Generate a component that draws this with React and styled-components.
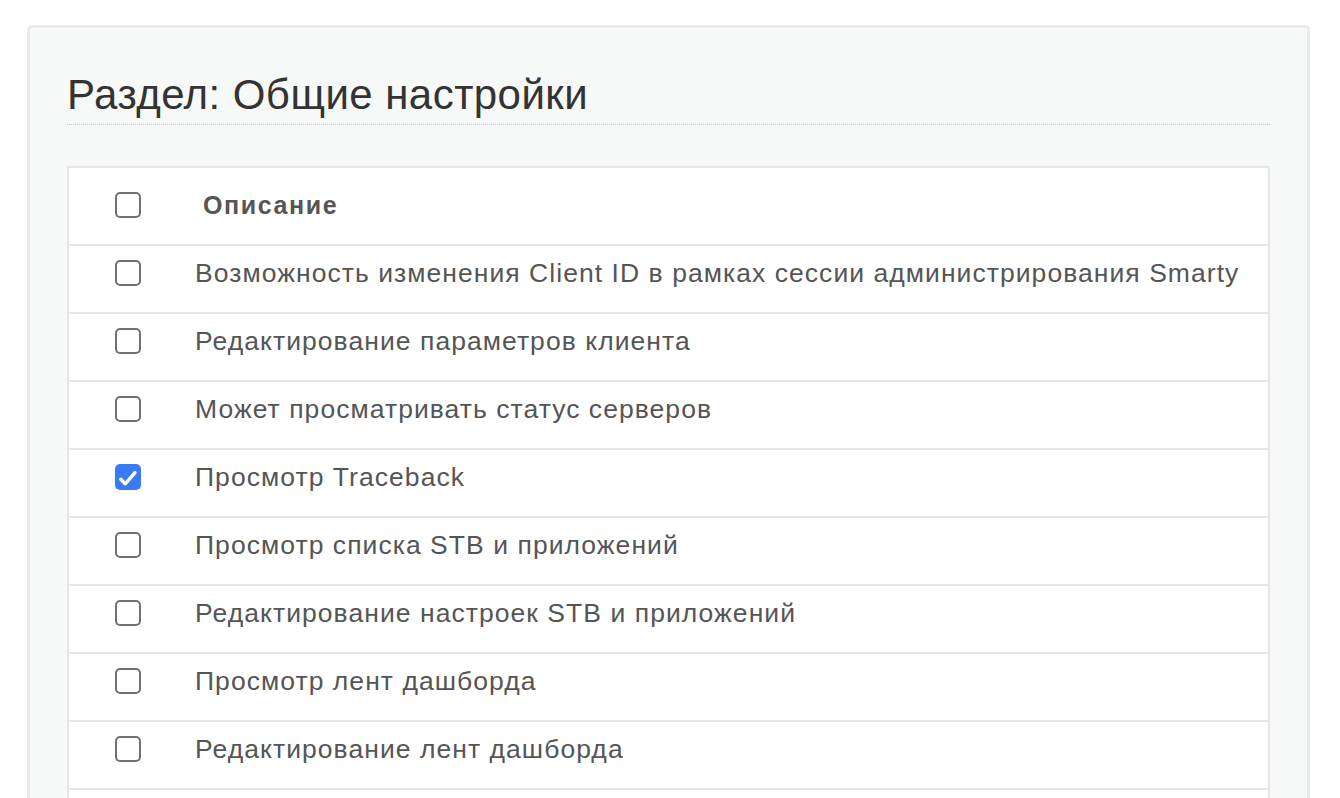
import styled, { createGlobalStyle } from "styled-components";

const GlobalStyle = createGlobalStyle`
    body {
        margin: 0;
        background: #ffffff;
        font-family: "Liberation Sans", Arial, sans-serif;
    }
`;

const Page = styled.div`
    padding: 25px 30px 0 27px;
    height: 798px;
    box-sizing: border-box;
    overflow: hidden;
`;

const Panel = styled.section`
    background: #f7f8f8;
    border: 3px solid #e8eaeb;
    border-radius: 5px;
    padding: 44px 37px 40px;
    min-height: 900px;
`;

const Title = styled.h2`
    margin: 0 0 41px;
    padding-bottom: 6px;
    font-size: 42px;
    line-height: 46px;
    letter-spacing: 0.45px;
    font-weight: 400;
    color: #333333;
    border-bottom: 1px dotted #c8c8c8;
`;

const Table = styled.div`
    background: #ffffff;
    border: 2px solid #e6e6e6;
`;

const Row = styled.div`
    display: grid;
    grid-template-columns: 118px 1fr;
    align-items: center;
    box-sizing: border-box;
    height: ${(p) => (p.$head ? "76px" : "68px")};
    padding-bottom: ${(p) => (p.$head ? "2px" : "12px")};
    border-top: ${(p) => (p.$head ? "none" : "2px solid #e6e6e6")};
`;

const CheckCell = styled.div`
    display: flex;
    justify-content: center;
`;

const Box = styled.span`
    display: inline-flex;
    align-items: center;
    justify-content: center;
    width: 26px;
    height: 26px;
    box-sizing: border-box;
    border-radius: 5px;
    border: ${(p) => (p.$checked ? "none" : "2px solid #707070")};
    background: ${(p) => (p.$checked ? "#3a7bf5" : "#ffffff")};
`;

const Label = styled.div`
    padding-left: ${(p) => (p.$head ? "16px" : "8px")};
    font-size: ${(p) => (p.$head ? "25px" : "26.5px")};
    letter-spacing: ${(p) => (p.$head ? "1.6px" : "1.05px")};
    font-weight: ${(p) => (p.$head ? 700 : 400)};
    color: #555555;
    white-space: nowrap;
`;

function Checkbox({ checked }) {
    return (
        <Box $checked={checked}>
            {checked && (
                <svg width="26" height="26" viewBox="0 0 26 26">
                    <path
                        d="M5.8 15.3 L10.2 19.8 L20 8.6"
                        fill="none"
                        stroke="#ffffff"
                        strokeWidth="3.4"
                        strokeLinecap="round"
                        strokeLinejoin="round"
                    />
                </svg>
            )}
        </Box>
    );
}

const permissions = [
    { text: "Возможность изменения Client ID в рамках сессии администрирования Smarty" },
    { text: "Редактирование параметров клиента" },
    { text: "Может просматривать статус серверов" },
    { text: "Просмотр Traceback", checked: true },
    { text: "Просмотр списка STB и приложений" },
    { text: "Редактирование настроек STB и приложений" },
    { text: "Просмотр лент дашборда" },
    { text: "Редактирование лент дашборда" },
];

function App() {
    return (
        <>
            <GlobalStyle />
            <Page>
                <Panel>
                    <Title>Раздел: Общие настройки</Title>
                    <Table>
                        <Row $head>
                            <CheckCell>
                                <Checkbox />
                            </CheckCell>
                            <Label $head>Описание</Label>
                        </Row>
                        {permissions.map((item) => (
                            <Row key={item.text}>
                                <CheckCell>
                                    <Checkbox checked={item.checked} />
                                </CheckCell>
                                <Label>{item.text}</Label>
                            </Row>
                        ))}
                        <Row />
                    </Table>
                </Panel>
            </Page>
        </>
    );
}

export default App;
